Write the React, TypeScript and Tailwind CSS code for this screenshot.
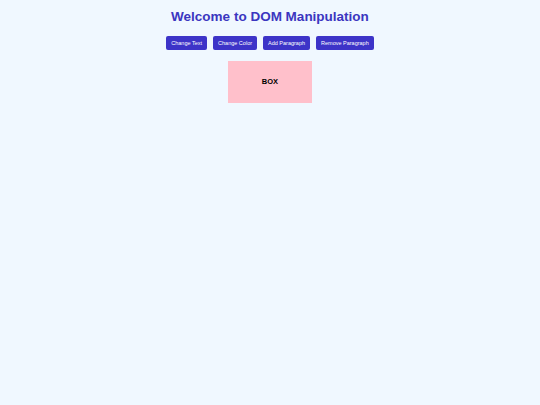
import React from "react";

export default function App() {
  const buttons = ["Change Text", "Change Color", "Add Paragraph", "Remove Paragraph"];
  return (
    <div className="min-h-[405px] w-[540px] bg-[#f0f8ff] flex flex-col items-center font-['Liberation_Sans',Arial,sans-serif]">
      <h1 className="mt-[8px] text-[13.5px] leading-[18px] font-bold text-[#3b36c0]">Welcome to DOM Manipulation</h1>
      <div className="mt-[10px] flex gap-[6px]">
        {buttons.map((b) => (
          <button key={b} className="h-[14px] px-[5px] rounded-[2px] bg-[#3d34c8] text-white text-[5.5px] leading-[14px]">
            {b}
          </button>
        ))}
      </div>
      <div className="mt-[11px] w-[84px] h-[42px] bg-[#ffc0cb] flex items-center justify-center text-[7.5px] font-bold text-black">
        BOX
      </div>
    </div>
  );
}
